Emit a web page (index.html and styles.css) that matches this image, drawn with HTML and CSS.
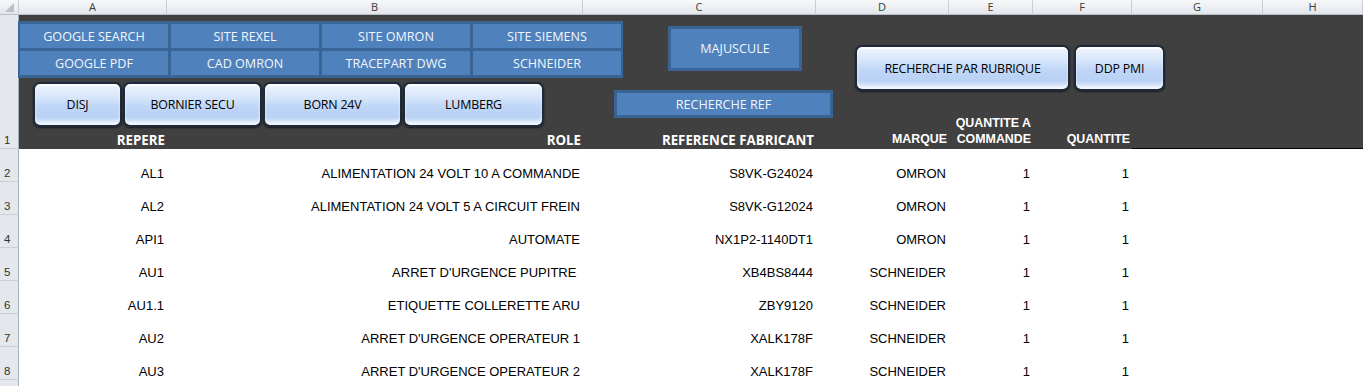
FILE: index.html
```html
<!DOCTYPE html>
<html lang="fr">

<head>
    <meta charset="UTF-8">
    <meta name="viewport" content="width=device-width, initial-scale=1.0">
    <title>Liste matériel</title>
    <link rel="stylesheet" href="styles.css">
</head>

<body>
    <div class="sheet">
        <!-- entêtes de colonnes -->
        <div class="row col-heads">
            <div class="corner">
                <svg width="19" height="15" viewBox="0 0 19 15">
                    <polygon points="14,3 14,12 5,12" fill="#b9c0c9" />
                </svg>
            </div>
            <div class="col-head">A</div>
            <div class="col-head">B</div>
            <div class="col-head">C</div>
            <div class="col-head">D</div>
            <div class="col-head">E</div>
            <div class="col-head">F</div>
            <div class="col-head">G</div>
            <div class="col-head">H</div>
        </div>

        <!-- ligne 1 : titres -->
        <div class="row title-row">
            <div class="row-head">1</div>
            <div class="th">REPERE</div>
            <div class="th">ROLE</div>
            <div class="th">REFERENCE FABRICANT</div>
            <div class="th th-arial">MARQUE</div>
            <div class="th th-arial">QUANTITE A<br>COMMANDE</div>
            <div class="th th-arial">QUANTITE</div>
            <div class="th th-line"></div>
            <div class="th th-line"></div>
        </div>

        <div class="row data-row">
            <div class="row-head">2</div>
            <div class="td">AL1</div>
            <div class="td">ALIMENTATION 24 VOLT 10 A COMMANDE</div>
            <div class="td">S8VK-G24024</div>
            <div class="td">OMRON</div>
            <div class="td">1</div>
            <div class="td">1</div>
            <div class="td"></div>
            <div class="td"></div>
        </div>
        <div class="row data-row">
            <div class="row-head">3</div>
            <div class="td">AL2</div>
            <div class="td">ALIMENTATION 24 VOLT 5 A CIRCUIT FREIN</div>
            <div class="td">S8VK-G12024</div>
            <div class="td">OMRON</div>
            <div class="td">1</div>
            <div class="td">1</div>
            <div class="td"></div>
            <div class="td"></div>
        </div>
        <div class="row data-row">
            <div class="row-head">4</div>
            <div class="td">API1</div>
            <div class="td">AUTOMATE</div>
            <div class="td">NX1P2-1140DT1</div>
            <div class="td">OMRON</div>
            <div class="td">1</div>
            <div class="td">1</div>
            <div class="td"></div>
            <div class="td"></div>
        </div>
        <div class="row data-row">
            <div class="row-head">5</div>
            <div class="td">AU1</div>
            <div class="td">ARRET D'URGENCE PUPITRE&nbsp;</div>
            <div class="td">XB4BS8444</div>
            <div class="td">SCHNEIDER</div>
            <div class="td">1</div>
            <div class="td">1</div>
            <div class="td"></div>
            <div class="td"></div>
        </div>
        <div class="row data-row">
            <div class="row-head">6</div>
            <div class="td">AU1.1</div>
            <div class="td">ETIQUETTE COLLERETTE ARU</div>
            <div class="td">ZBY9120</div>
            <div class="td">SCHNEIDER</div>
            <div class="td">1</div>
            <div class="td">1</div>
            <div class="td"></div>
            <div class="td"></div>
        </div>
        <div class="row data-row">
            <div class="row-head">7</div>
            <div class="td">AU2</div>
            <div class="td">ARRET D'URGENCE OPERATEUR 1</div>
            <div class="td">XALK178F</div>
            <div class="td">SCHNEIDER</div>
            <div class="td">1</div>
            <div class="td">1</div>
            <div class="td"></div>
            <div class="td"></div>
        </div>
        <div class="row data-row">
            <div class="row-head">8</div>
            <div class="td">AU3</div>
            <div class="td">ARRET D'URGENCE OPERATEUR 2</div>
            <div class="td">XALK178F</div>
            <div class="td">SCHNEIDER</div>
            <div class="td">1</div>
            <div class="td">1</div>
            <div class="td"></div>
            <div class="td"></div>
        </div>
        <div class="row data-row">
            <div class="row-head"></div>
        </div>

        <!-- boutons (formes posées sur la feuille) -->
        <div class="links">
            <button class="flat-btn">GOOGLE SEARCH</button>
            <button class="flat-btn">SITE REXEL</button>
            <button class="flat-btn">SITE OMRON</button>
            <button class="flat-btn">SITE SIEMENS</button>
            <button class="flat-btn">GOOGLE PDF</button>
            <button class="flat-btn">CAD OMRON</button>
            <button class="flat-btn">TRACEPART DWG</button>
            <button class="flat-btn">SCHNEIDER</button>
        </div>

        <div class="gloss-group filters">
            <button class="gloss-btn btn-disj">DISJ</button>
            <button class="gloss-btn btn-wide">BORNIER SECU</button>
            <button class="gloss-btn btn-wide">BORN 24V</button>
            <button class="gloss-btn btn-lumberg">LUMBERG</button>
        </div>

        <button class="flat-btn solo btn-majuscule">MAJUSCULE</button>
        <button class="flat-btn solo btn-recherche">RECHERCHE REF</button>

        <div class="gloss-group search">
            <button class="gloss-btn btn-rubrique">RECHERCHE PAR RUBRIQUE</button>
            <button class="gloss-btn btn-ddp">DDP PMI</button>
        </div>
    </div>
</body>

</html>
```

FILE: styles.css
```css
body {
    margin: 0;
    background-color: white;
    font-family: 'Liberation Sans', Arial, sans-serif;
}

.sheet {
    position: relative;
    width: 1363px;
    height: 386px;
    overflow: hidden;
}

.row {
    display: grid;
    grid-template-columns: 19px 148px 416px 233px 133px 84px 99px 131px 1fr;
}

/* entêtes */
.col-heads {
    height: 15px;
}

.corner,
.col-head {
    box-sizing: border-box;
    height: 15px;
    background: linear-gradient(#f7f8fa, #e2e6eb);
    border-bottom: 1px solid #b7bec8;
    border-right: 1px solid #c9ced6;
}

.corner svg {
    display: block;
}

.col-head {
    font-family: 'Open Sans', sans-serif;
    font-size: 11px;
    line-height: 14px;
    color: #3a3a3a;
    text-align: center;
}

.row-head {
    box-sizing: border-box;
    background-color: #e4e8ed;
    border-right: 1px solid #a9b3c0;
    border-bottom: 1px solid #c9cfd7;
    font-size: 11.5px;
    color: #333;
    padding: 0 0 2px 4px;
    display: flex;
    align-items: flex-end;
}

/* ligne 1 */
.title-row {
    height: 134px;
}

.th {
    background-color: #404040;
    color: white;
    font-family: 'Open Sans', sans-serif;
    font-weight: bold;
    font-size: 13.3px;
    text-align: right;
    padding: 0 2px 0 0;
    display: flex;
    align-items: flex-end;
    justify-content: flex-end;
    line-height: 17px;
}

.th-arial {
    font-family: 'Liberation Sans', Arial, sans-serif;
    font-size: 12.4px;
    line-height: 16px;
    padding-bottom: 2px;
}

.th-line {
    box-sizing: border-box;
    border-bottom: 1px solid #000;
}

/* données */
.data-row {
    height: 33px;
}

.td {
    display: flex;
    align-items: flex-end;
    justify-content: flex-end;
    padding: 0 3px 1px 0;
    font-size: 13px;
    line-height: 15px;
    color: #000;
    white-space: nowrap;
}

/* boutons */
button {
    font-family: 'Open Sans', sans-serif;
    cursor: pointer;
    padding: 0;
    margin: 0;
}

.links {
    position: absolute;
    left: 18px;
    top: 21px;
    display: grid;
    grid-template-columns: repeat(4, 148px);
    grid-auto-rows: 24px;
    gap: 3px;
    padding: 3px 2px;
    background-color: #3a6396;
}

.flat-btn {
    background-color: #4f81bd;
    border: none;
    color: #f2f6fc;
    font-size: 12.6px;
}

.solo {
    position: absolute;
    border: 3px solid #3a6396;
    box-sizing: border-box;
}

.btn-majuscule {
    left: 668px;
    top: 26px;
    width: 134px;
    height: 45px;
}

.btn-recherche {
    left: 614px;
    top: 90px;
    width: 219px;
    height: 28px;
}

.gloss-group {
    position: absolute;
    display: flex;
}

.filters {
    left: 33px;
    top: 82px;
    height: 45px;
    gap: 1px;
}

.search {
    left: 855px;
    top: 45px;
    height: 46px;
    gap: 4px;
}

.gloss-btn {
    box-sizing: border-box;
    height: 100%;
    border: 2px solid #1d2a3b;
    border-radius: 7px;
    background: linear-gradient(#eef4fd 0%, #d9e7fa 30%, #bfd6f6 55%, #b9d1f4 80%, #e3eefc 100%);
    box-shadow: 0 1px 2px rgba(0, 0, 0, 0.6), inset 0 -3px 3px rgba(255, 255, 255, 0.6), inset 0 2px 1px rgba(255, 255, 255, 0.8);
    color: #000;
    font-size: 12.4px;
    letter-spacing: -0.2px;
}

.btn-disj {
    width: 89px;
}

.btn-wide {
    width: 139px;
}

.btn-lumberg {
    width: 141px;
}

.btn-rubrique {
    width: 215px;
}

.btn-ddp {
    width: 91px;
}
```
